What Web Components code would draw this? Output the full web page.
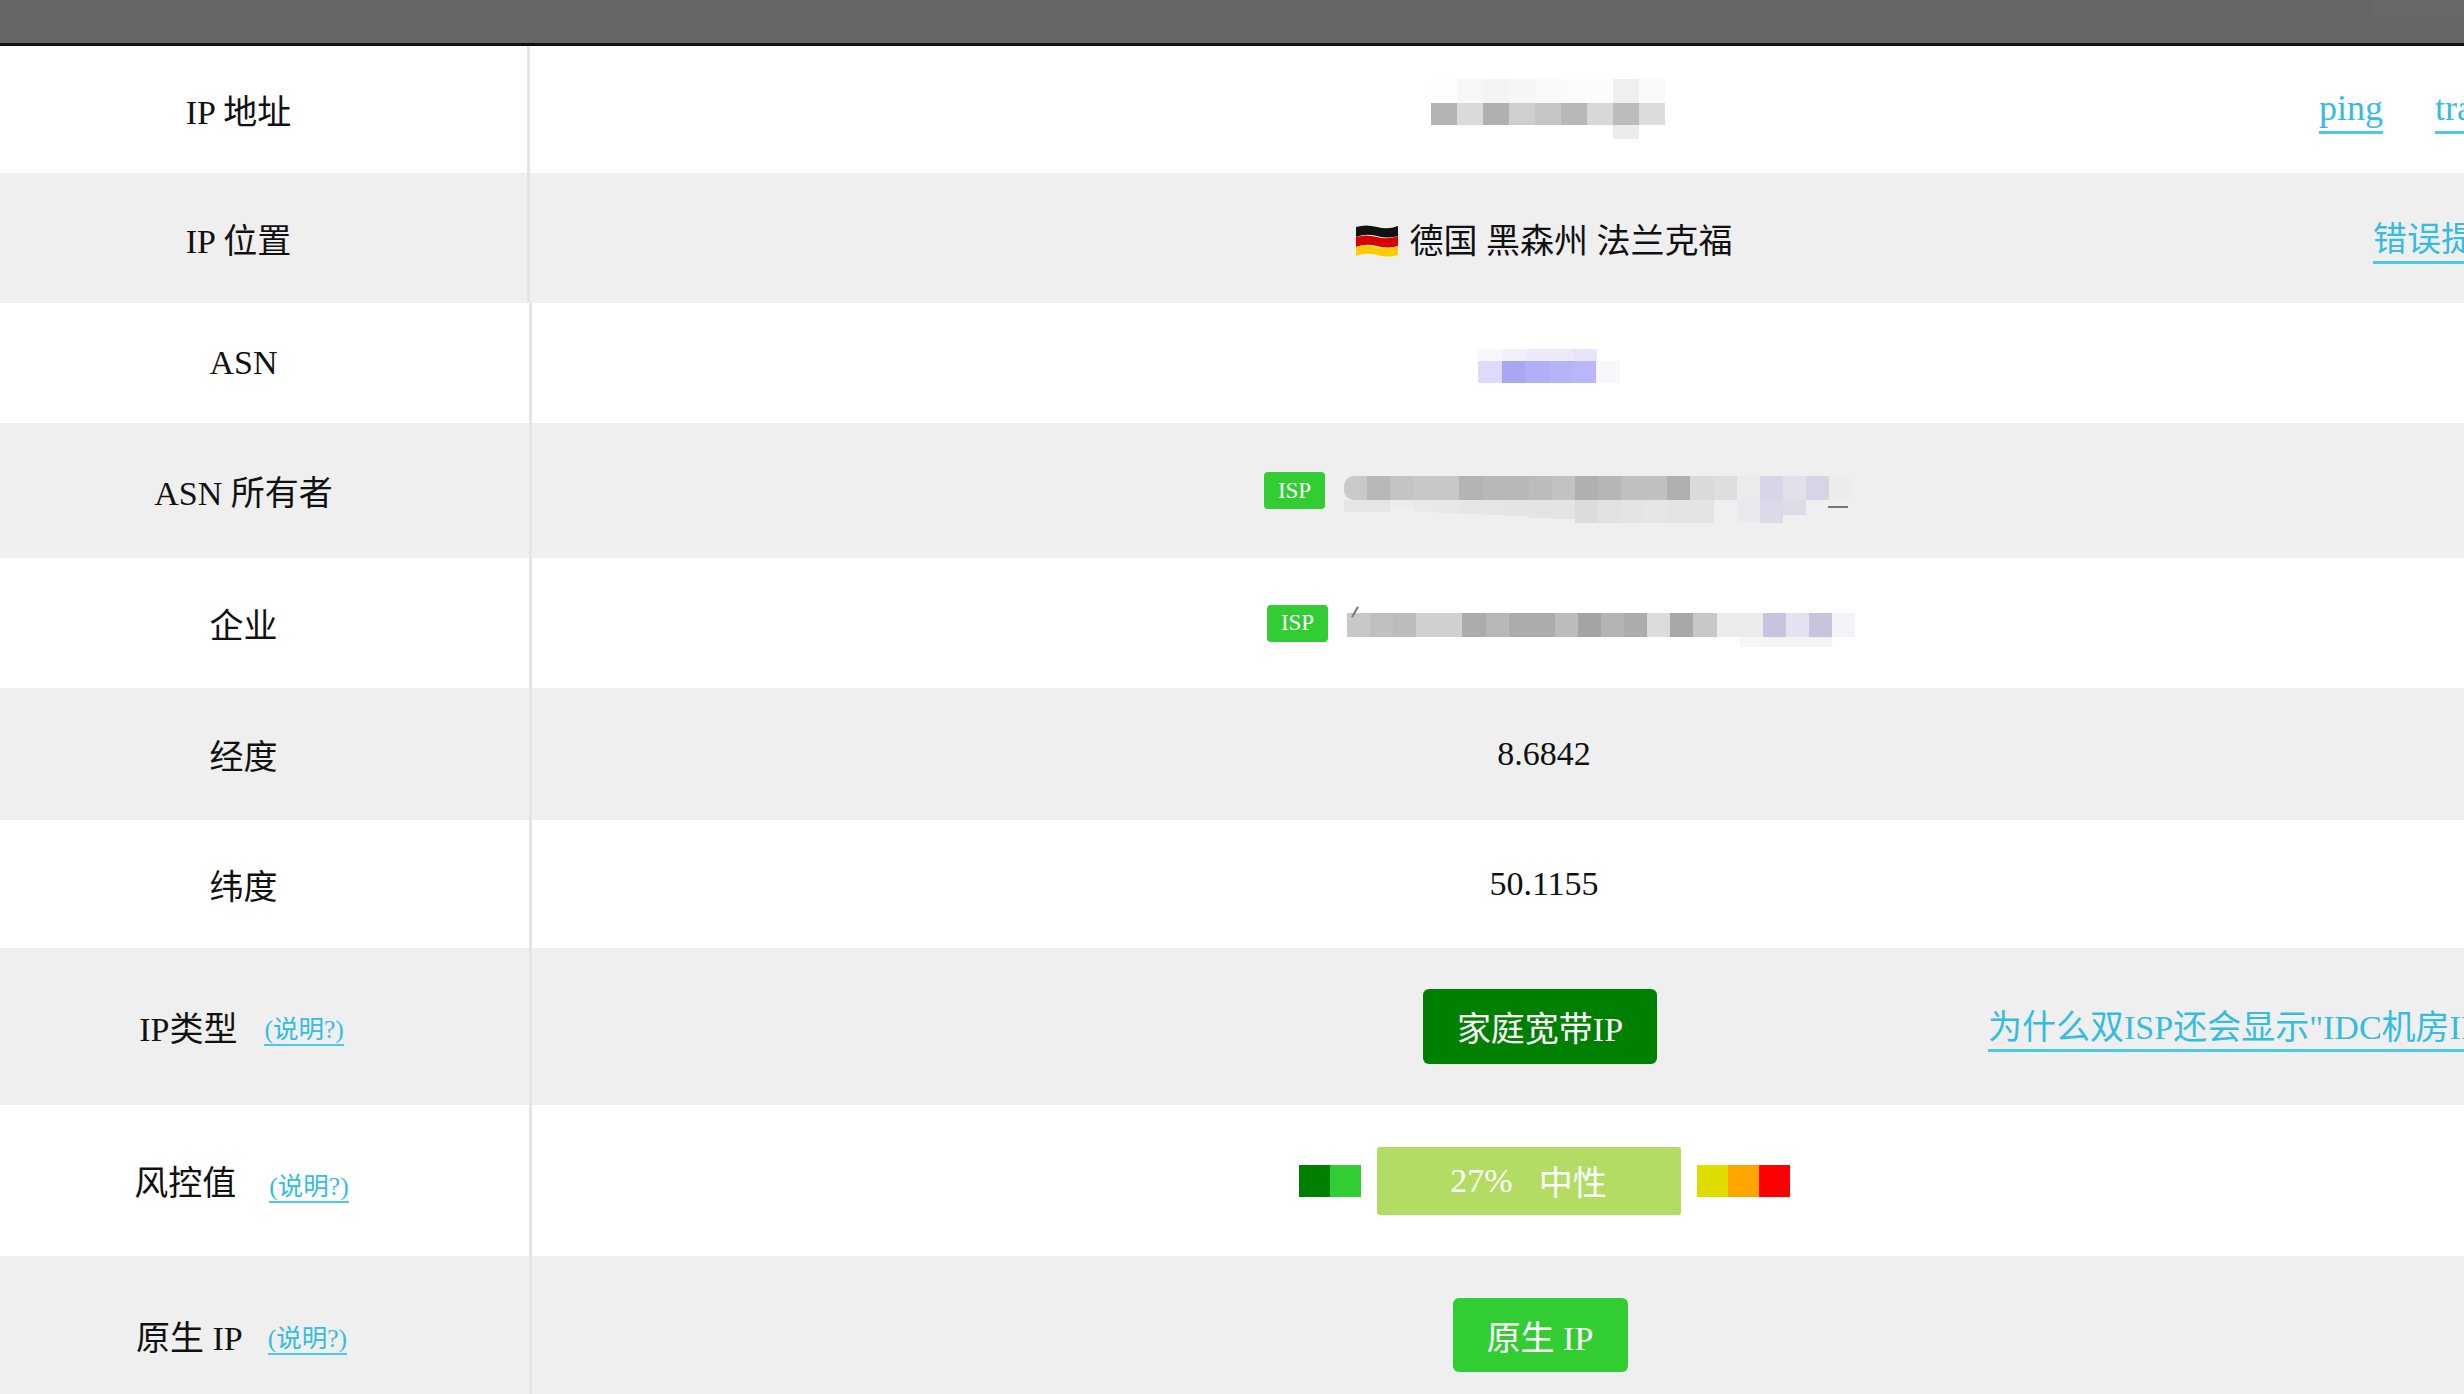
<!DOCTYPE html>
<html lang="zh">
<head>
<meta charset="utf-8">
<title>IP</title>
<style>
  html, body { margin:0; padding:0; background:#fff; overflow:hidden; }
  body { width:2464px; height:1394px; font-family:"Liberation Serif","Noto Sans CJK SC",serif; font-size:34px; color:#111; }
  a { color:#35bde0; text-decoration:none; border-bottom:3px solid #4dc8e8; padding-bottom:3px; font-size:34px; }
  a.help { font-size:25.5px; border-bottom-width:2px; padding-bottom:0; position:relative; }
</style>
</head>
<body>
<ip-report>
  <ip-row h="127" lw="530" lp="50" link="2319">
    <span slot="label">IP 地址</span>
    <mosaic-stack style="margin:0 0 2px 8px">
      <pixel-strip style="height:24px" cells="fdfdfd f7f7f7 f4f4f4 f6f6f6 f9f9f9 fbfbfb fcfcfc efefef fafafa"></pixel-strip>
      <pixel-strip style="height:22px;width:234px" cells="b4b4b4 dadada b0b0b0 cfcfcf c6c6c6 b8b8b8 d8d8d8 bcbcbc dcdcdc"></pixel-strip>
      <pixel-strip style="height:14px" cells="fff fff fff fff fff fff fff ececec fff"></pixel-strip>
    </mosaic-stack>
    <span slot="extra"><a style="font-size:36px">ping</a><a style="font-size:36px;margin-left:52px">traceroute</a></span>
  </ip-row>
  <ip-row h="130" lw="530" lp="50" link="2373" grey>
    <span slot="label">IP 位置</span>
    <span><de-flag></de-flag><span style="margin-left:12px">德国 黑森州 法兰克福</span></span>
    <span slot="extra"><a>错误提交</a></span>
  </ip-row>
  <ip-row h="120" lp="42">
    <span slot="label">ASN</span>
    <mosaic-stack style="width:142px;margin:6px 0 0 10px">
      <pixel-strip style="height:12px;width:119px" cells="f7f7fd f1f0fe ecebfd ecebfd e6e5fb"></pixel-strip>
      <pixel-strip style="height:22px" cells="dcdbfb aba6f4 b3aff6 b7b3f8 b9b6fa f7f7fc"></pixel-strip>
    </mosaic-stack>
  </ip-row>
  <ip-row h="135" lp="42" grey>
    <span slot="label">ASN 所有者</span>
    <isp-value style="margin-left:28px" top="4"
      cells="c9c9c9 b8b8b8 c4c4c4 c8c8c8 c8c8c8 b4b4b4 b8b8b8 b8b8b8 bcbcbc c2c2c2 b0b0b0 b6b6b6 c0c0c0 c0c0c0 b0b0b0 dadada dedede ebebeb d8d6e6 e2e1ea d6d4e6 ececec"
      under="e5e5e5:12 e5e5e5:12 ececec:8 e9e9e9:12 e8e8e8:13 e6e6e6:14 e6e6e6:15 e4e4e4:16 e4e4e4:18 e4e4e4:19 dcdcdc:23 e2e2e2:23 e4e4e4:23 e6e6e6:23 e4e4e4:23 e4e4e4:23 efefef:0 e9e9f0:23 dcdae8:23 dedce8:15 efefef:0 efefef:0"
      tick="484,30,20,0"></isp-value>
  </ip-row>
  <ip-row h="130" lp="42">
    <span slot="label">企业</span>
    <isp-value style="margin-left:34px" top="8"
      cells="c8c8c8 c0c0c0 bcbcbc d0d0d0 d0d0d0 acacac b8b8b8 acacac acacac bcbcbc a4a4a4 b4b4b4 acacac dcdcdc a8a8a8 c8c8c8 ececec ececec c8c4de e4e2f0 c8c4de f4f4f8"
      under="fff:0 fff:0 fff:0 fff:0 fff:0 fff:0 fff:0 fff:0 fff:0 fff:0 fff:0 fff:0 fff:0 fff:0 fff:0 fff:0 fff:0 f6f5fa:10 f4f3f8:10 f4f3f8:10 f4f3f8:10 fff:0"
      tick="2,-2,12,-60"></isp-value>
  </ip-row>
  <ip-row h="132" lp="42" grey>
    <span slot="label">经度</span>
    <span>8.6842</span>
  </ip-row>
  <ip-row h="128" lp="42">
    <span slot="label">纬度</span>
    <span>50.1155</span>
  </ip-row>
  <ip-row h="157" lp="46" link="1988" grey>
    <span slot="label">IP类型<a class="help" style="margin-left:27px;top:-3px">(说明?)</a></span>
    <ip-tag color="#008000" style="width:234px;height:75px;margin-right:8px">家庭宽带IP</ip-tag>
    <span slot="extra"><a>为什么双ISP还会显示"IDC机房IP"?</a></span>
  </ip-row>
  <ip-row h="151" lp="46">
    <span slot="label">风控值<a class="help" style="margin-left:33px">(说明?)</a></span>
    <risk-meter></risk-meter>
  </ip-row>
  <ip-row h="158" lp="46" grey>
    <span slot="label">原生 IP<a class="help" style="margin-left:25px;top:-3px">(说明?)</a></span>
    <ip-tag color="#32cd32" style="width:175px;height:74px;margin-right:8px">原生 IP</ip-tag>
  </ip-row>
</ip-report>

<script>
  class IpReport extends HTMLElement {
    constructor() {
      super();
      this.attachShadow({ mode: 'open' }).innerHTML = `
        <style>
          :host { display:flex; flex-direction:column; width:2464px; height:1394px; overflow:hidden; }
          header { height:43px; flex:none; border-bottom:3px solid #111;
                   background:linear-gradient(#6a6866,#6a6866) right top / 92px 18px no-repeat, #666; }
          slot { display:contents; }
        </style>
        <header></header>
        <slot></slot>`;
    }
  }

  class IpRow extends HTMLElement {
    constructor() {
      super();
      const h = this.getAttribute('h') || 128;
      const lw = +this.getAttribute('lw') || 532;
      const lp = this.getAttribute('lp') || 0;
      const link = this.getAttribute('link');
      this.attachShadow({ mode: 'open' }).innerHTML = `
        <style>
          :host {
            display:grid; grid-template-columns:${lw}px 1fr; height:${h}px; flex:none;
            background:${this.hasAttribute('grey') ? '#efefef' : '#fff'}; position:relative;
          }
          .label {
            display:flex; align-items:center; justify-content:center;
            padding-right:${lp}px; border-right:3px solid #e4e4e4; box-sizing:border-box;
          }
          /* the table runs past the window, so the value column centres on x=1544 */
          .value { display:flex; align-items:center; justify-content:center; width:${2 * (1544 - lw)}px; }
          .extra { position:absolute; left:${link}px; top:0; bottom:4px; display:flex; align-items:center; white-space:nowrap; }
          ::slotted(span[slot=label]) { white-space:nowrap; }
        </style>
        <div class="label"><slot name="label"></slot></div>
        <div class="value"><slot></slot></div>
        ${link ? '<div class="extra"><slot name="extra"></slot></div>' : ''}`;
    }
  }

  // one band of censor mosaic, cells are "hex" or "hex:height"
  class PixelStrip extends HTMLElement {
    constructor() {
      super();
      const cells = (this.getAttribute('cells') || '').split(' ').filter(Boolean);
      const html = cells.map(c => {
        const [col, ht] = c.split(':');
        return `<i style="background:#${col}${ht ? `;height:${ht}px` : ''}"></i>`;
      }).join('');
      this.attachShadow({ mode: 'open' }).innerHTML = `
        <style>
          :host { display:flex; flex:none; align-items:stretch; }
          i { flex:1; display:block; align-self:${html.includes('height') ? 'flex-start' : 'stretch'}; }
        </style>
        ${html}`;
    }
  }

  class MosaicStack extends HTMLElement {
    constructor() {
      super();
      this.attachShadow({ mode: 'open' }).innerHTML = `
        <style>:host { display:flex; flex-direction:column; flex:none; }</style>
        <slot></slot>`;
    }
  }

  class IspValue extends HTMLElement {
    constructor() {
      super();
      const top = this.getAttribute('top') || 0;
      const [tx, ty, tw, ta] = (this.getAttribute('tick') || '0,0,0,0').split(',');
      this.attachShadow({ mode: 'open' }).innerHTML = `
        <style>
          :host { display:flex; align-items:flex-start; gap:19px; height:37px; }
          b { display:flex; align-items:center; justify-content:center; width:61px; height:37px; border-radius:4px;
              background:#32cd32; color:#fff; font-weight:400; font-size:23px; flex:none; }
          .mosaic { width:508px; margin-top:${top}px; position:relative; }
          .tick { position:absolute; left:${tx}px; top:${ty}px; width:${tw}px; height:2px; background:#777;
                  transform:rotate(${ta}deg); }
        </style>
        <b>ISP</b>
        <div class="mosaic">
          <pixel-strip style="height:24px;border-radius:${top == 4 ? '10px 0 0 10px' : '0'};overflow:hidden" cells="${this.getAttribute('cells')}"></pixel-strip>
          <pixel-strip style="height:23px" cells="${this.getAttribute('under')}"></pixel-strip>
          <div class="tick"></div>
        </div>`;
    }
  }

  class IpTag extends HTMLElement {
    constructor() {
      super();
      const color = this.getAttribute('color');
      this.attachShadow({ mode: 'open' }).innerHTML = `
        <style>
          :host { display:flex; align-items:center; justify-content:center; border-radius:6px; background:${color}; color:#fff; font-size:34px; }
        </style>
        <slot></slot>`;
    }
  }

  class RiskMeter extends HTMLElement {
    constructor() {
      super();
      this.attachShadow({ mode: 'open' }).innerHTML = `
        <style>
          :host { display:flex; align-items:center; gap:16px; }
          .seg { display:flex; height:32px; }
          .seg i { width:31px; display:block; }
          .now { width:304px; height:68px; border-radius:3px; background:#b2dc64; color:#fff; display:flex; align-items:center; justify-content:center; gap:26px; font-size:34px; }
        </style>
        <div class="seg"><i style="background:#008000"></i><i style="background:#32cd32"></i></div>
        <div class="now"><span>27%</span><span>中性</span></div>
        <div class="seg"><i style="background:#e0dc00"></i><i style="background:#ffa500"></i><i style="background:#f00"></i></div>`;
    }
  }

  class DeFlag extends HTMLElement {
    constructor() {
      super();
      this.attachShadow({ mode: 'open' }).innerHTML = `
        <style>:host { display:inline-block; width:42px; height:32px; vertical-align:-4px; } svg { display:block; }</style>
        <svg width="42" height="32" viewBox="0 0 42 32">
          <path d="M0 2q10-3 21 0t21-1v10q-10 3-21 0t-21 1z" fill="#111"/>
          <path d="M0 12q10-3 21 0t21-1v10q-10 3-21 0t-21 1z" fill="#d80000"/>
          <path d="M0 22q10-3 21 0t21-1v9q-10 3-21 0t-21 1z" fill="#fc0"/>
        </svg>`;
    }
  }

  customElements.define('pixel-strip', PixelStrip);
  customElements.define('mosaic-stack', MosaicStack);
  customElements.define('de-flag', DeFlag);
  customElements.define('isp-value', IspValue);
  customElements.define('ip-tag', IpTag);
  customElements.define('risk-meter', RiskMeter);
  customElements.define('ip-row', IpRow);
  customElements.define('ip-report', IpReport);
</script>
</body>
</html>
